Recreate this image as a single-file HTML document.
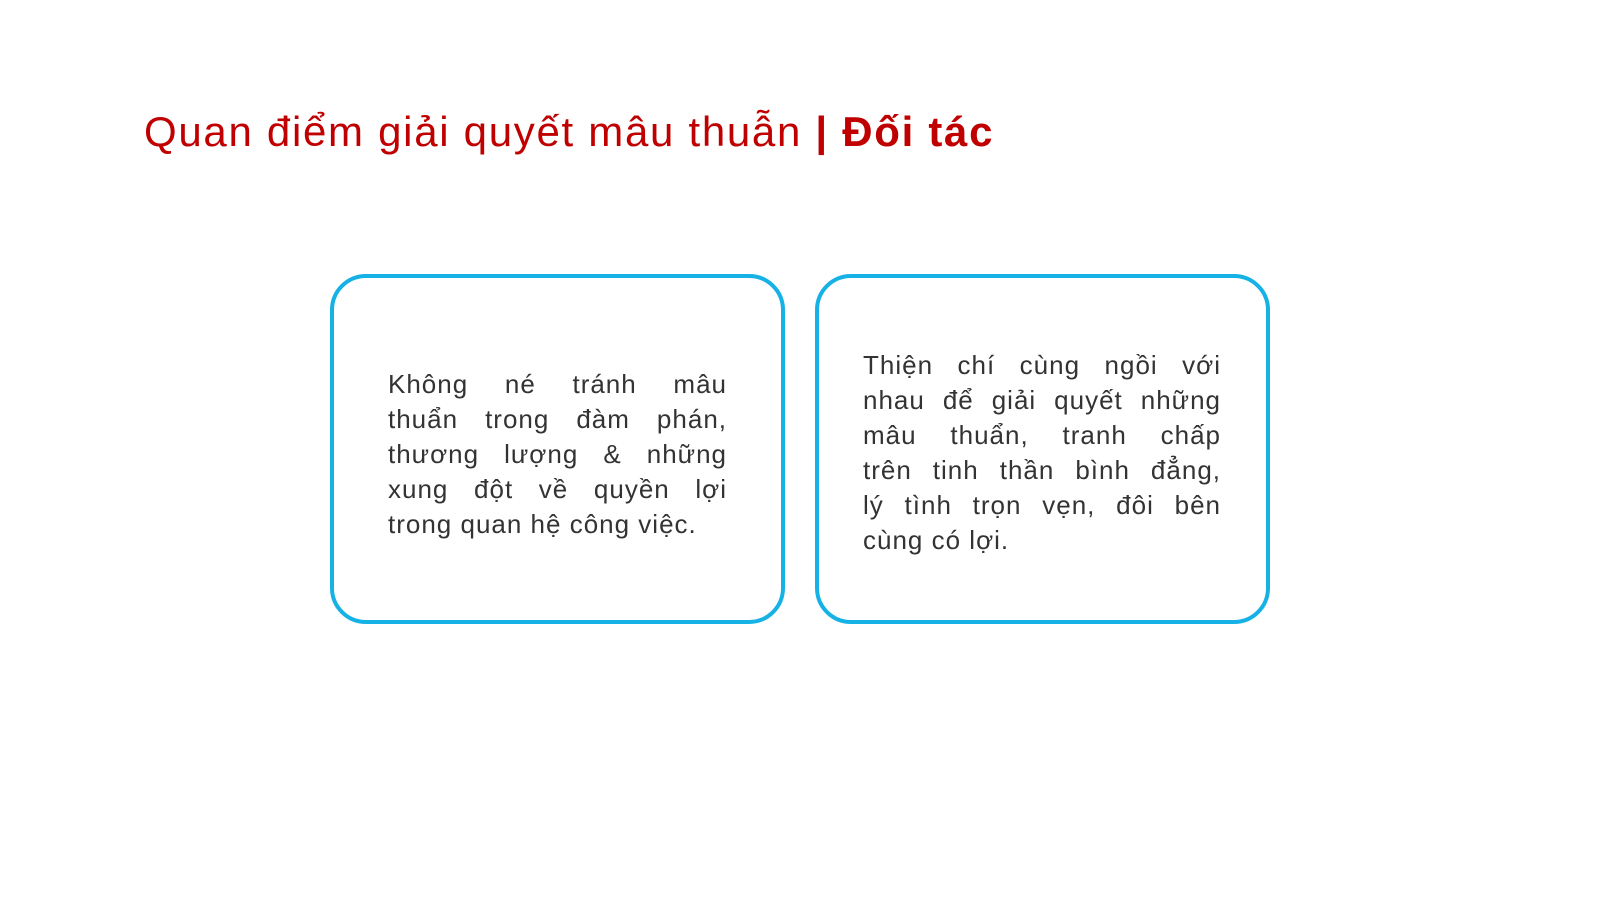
<!DOCTYPE html>
<html><head><meta charset="utf-8"><style>
body{margin:0;width:1600px;height:900px;background:#fff;position:relative;overflow:hidden;font-family:"Liberation Sans",sans-serif}
.t{position:absolute;left:144px;top:108px;font-size:42px;color:#c00000;white-space:nowrap;letter-spacing:1.7px;font-weight:normal}
.t b{font-weight:bold}
.box{position:absolute;top:274px;width:447px;height:342px;border:4px solid #17b2e5;border-radius:36px}
.txt{position:absolute;font-size:26px;color:#333;line-height:35.1px;letter-spacing:1px}
.txt div{text-align:justify;text-align-last:justify;white-space:nowrap}
.txt div.l{text-align-last:left}
</style></head><body>
<div class="t">Quan điểm giải quyết mâu thuẫn <b>| Đối tác</b></div>
<div class="box" style="left:330px"></div>
<div class="box" style="left:815px"></div>
<div class="txt" style="left:388px;top:367px;width:339px">
<div>Không né tránh mâu</div>
<div>thuẩn trong đàm phán,</div>
<div>thương lượng &amp; những</div>
<div>xung đột về quyền lợi</div>
<div class="l">trong quan hệ công việc.</div>
</div>
<div class="txt" style="left:863px;top:348px;width:358px">
<div>Thiện chí cùng ngồi với</div>
<div>nhau để giải quyết những</div>
<div>mâu thuẩn, tranh chấp</div>
<div>trên tinh thần bình đẳng,</div>
<div>lý tình trọn vẹn, đôi bên</div>
<div class="l">cùng có lợi.</div>
</div>
</body></html>
